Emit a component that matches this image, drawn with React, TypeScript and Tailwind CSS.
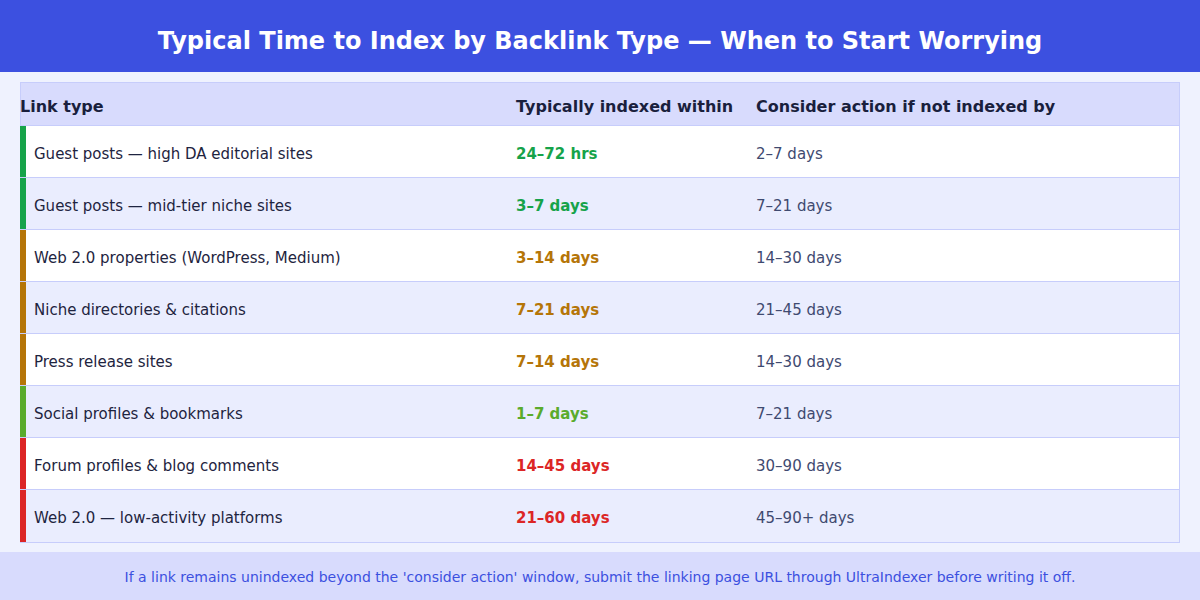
const rows = [
  { type: 'Guest posts — high DA editorial sites', within: '24–72 hrs', action: '2–7 days', tone: 'green' },
  { type: 'Guest posts — mid-tier niche sites', within: '3–7 days', action: '7–21 days', tone: 'green' },
  { type: 'Web 2.0 properties (WordPress, Medium)', within: '3–14 days', action: '14–30 days', tone: 'amber' },
  { type: 'Niche directories & citations', within: '7–21 days', action: '21–45 days', tone: 'amber' },
  { type: 'Press release sites', within: '7–14 days', action: '14–30 days', tone: 'amber' },
  { type: 'Social profiles & bookmarks', within: '1–7 days', action: '7–21 days', tone: 'lime' },
  { type: 'Forum profiles & blog comments', within: '14–45 days', action: '30–90 days', tone: 'red' },
  { type: 'Web 2.0 — low-activity platforms', within: '21–60 days', action: '45–90+ days', tone: 'red' },
];

const toneBorder: Record<string, string> = {
  green: 'border-l-[#16a34a]',
  amber: 'border-l-[#b57508]',
  lime: 'border-l-[#5aab2c]',
  red: 'border-l-[#dc2626]',
};

const toneText: Record<string, string> = {
  green: 'text-[#16a34a]',
  amber: 'text-[#b57508]',
  lime: 'text-[#5aab2c]',
  red: 'text-[#dc2626]',
};

export default function App() {
  return (
    <div className="w-[1200px] h-[600px] bg-[#eff2fe] flex flex-col font-['DejaVu_Sans',sans-serif]">
      <header className="h-[72px] bg-[#3c50e0] flex items-center justify-center shrink-0 pt-[9px]">
        <h1 className="text-white font-bold text-[24px]">
          Typical Time to Index by Backlink Type — When to Start Worrying
        </h1>
      </header>

      <div className="flex-1 px-5 pt-[10px]">
        <div className="border-t border-r border-b border-[#c7cdfb]">
          <div className="flex h-[43px] items-center bg-[#d8dbfd] text-[#1a1f3d] font-bold text-[16px] border-b border-l border-[#c7cdfb] pt-[6px]">
            <div className="w-[496px] -ml-px">Link type</div>
            <div className="w-[240px]">Typically indexed within</div>
            <div className="flex-1">Consider action if not indexed by</div>
          </div>
          {rows.map((row, i) => (
            <div
              key={row.type}
              className={`flex h-[52px] items-center text-[15px] ${i % 2 ? 'bg-[#eaedfe]' : 'bg-white'} ${i < rows.length - 1 ? 'border-b border-[#c7cdfb]' : ''}`}
            >
              <div className={`w-[496px] self-stretch flex items-center border-l-[6px] pl-2 pt-[5px] text-[#1e2440] ${toneBorder[row.tone]}`}>
                {row.type}
              </div>
              <div className={`w-[240px] pt-[5px] font-bold ${toneText[row.tone]}`}>{row.within}</div>
              <div className="flex-1 pt-[5px] text-[#3f4a70]">{row.action}</div>
            </div>
          ))}
        </div>
      </div>

      <footer className="h-[48px] bg-[#d8dbfd] flex items-center justify-center shrink-0 text-[#3c50e0] text-[14px] pt-[2px]">
        If a link remains unindexed beyond the 'consider action' window, submit the linking page URL through UltraIndexer before writing it off.
      </footer>
    </div>
  );
}
